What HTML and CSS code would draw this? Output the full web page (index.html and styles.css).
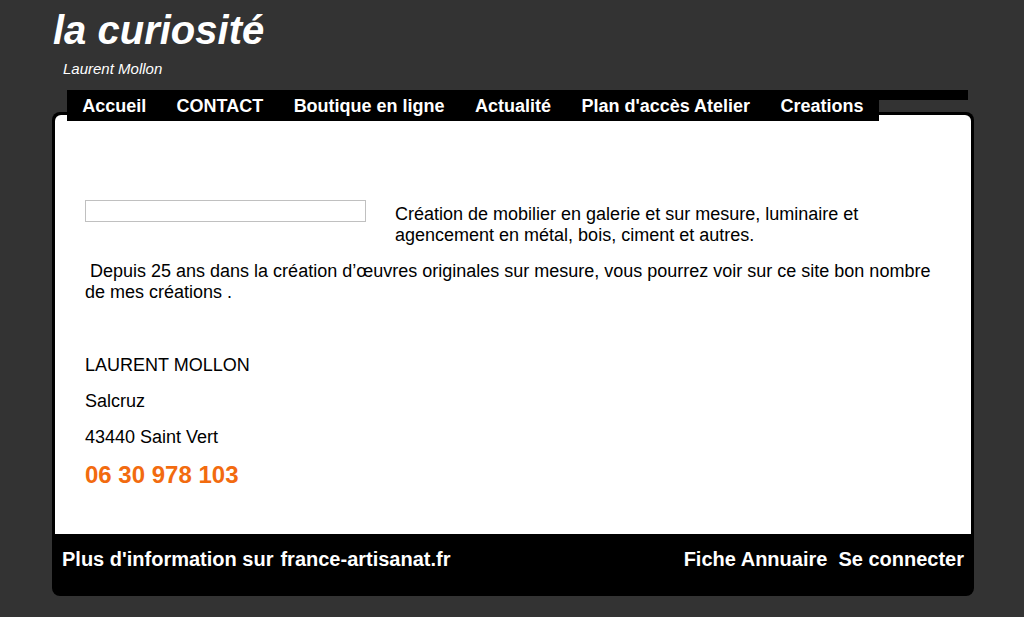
FILE: index.html
```html
<!DOCTYPE html>
<html lang="fr">
<head>
    <meta charset="UTF-8">
    <meta name="viewport" content="width=device-width, initial-scale=1.0">
    <title>la curiosité</title>
    <link rel="stylesheet" href="styles.css">
</head>
<body>
    <div class="page">
        <header class="site-header">
            <h1 class="site-title">la curiosité</h1>
            <p class="site-sub">Laurent Mollon</p>
        </header>
        <nav class="menu">
            <ul>
                <li><a href="#">Accueil</a></li>
                <li><a href="#">CONTACT</a></li>
                <li><a href="#">Boutique en ligne</a></li>
                <li><a href="#">Actualité</a></li>
                <li><a href="#">Plan d'accès Atelier</a></li>
                <li><a href="#">Creations</a></li>
            </ul>
        </nav>
        <section class="panel">
            <div class="content">
                <div class="intro">
                    <div class="pic"></div>
                    <p>Création de mobilier en galerie et sur mesure, luminaire et agencement en métal, bois, ciment et autres.</p>
                </div>
                <p class="lead">&nbsp;Depuis 25 ans dans la création d’œuvres originales sur mesure, vous pourrez voir sur ce site bon nombre de mes créations .</p>
                <div class="contact">
                    <p>LAURENT MOLLON</p>
                    <p>Salcruz</p>
                    <p>43440 Saint Vert</p>
                    <p class="phone">06 30 978 103</p>
                </div>
            </div>
            <footer class="foot">
                <div class="foot-left">
                    <span>Plus d'information sur</span>
                    <a href="#">france-artisanat.fr</a>
                </div>
                <div class="foot-right">
                    <a href="#">Fiche Annuaire</a>
                    <a href="#">Se connecter</a>
                </div>
            </footer>
        </section>
    </div>
</body>
</html>
```

FILE: styles.css
```css
body{
    margin: 0px;
    background: #333333;
    font-family: "Liberation Sans", Arial, sans-serif;
    color: #000;
}
a{
    color: #fff;
    text-decoration: none;
}
.page{
    width: 922px;
    margin: 0px 0px 0px 52px;
    padding-bottom: 21px;
}
.site-header{
    padding: 7px 0px 0px 1px;
}
.site-title{
    margin: 0px;
    font-size: 40px;
    font-style: italic;
    font-weight: bold;
    line-height: 46px;
    color: #fff;
}
.site-sub{
    margin: 6px 0px 0px 10px;
    font-size: 15px;
    font-style: italic;
    line-height: 20px;
    color: #fff;
}
.menu{
    position: relative;
    z-index: 1;
    margin: 11px 6px -9px 15px;
    background: linear-gradient(#000 0px, #000 10px, transparent 10px);
}
.menu ul{
    display: inline-flex;
    margin: 0px;
    padding: 0px;
    list-style: none;
    background: #000;
}
.menu li a{
    display: block;
    padding: 2px 15.2px 0px 15.2px;
    font-size: 18px;
    font-weight: bold;
    line-height: 29px;
}
.panel{
    background: #000;
    border-radius: 8px;
    padding: 3px 3px 0px 3px;
}
.content{
    background: #fff;
    border-radius: 6px 6px 0px 0px;
    padding: 85px 30px 45px 30px;
    font-size: 18px;
    line-height: 21px;
}
.content p{
    margin: 0px;
}
.intro{
    display: flex;
    gap: 29px;
    align-items: flex-start;
}
.pic{
    flex: none;
    width: 279px;
    height: 20px;
    border: 1px solid #c0c0c0;
}
.intro p{
    margin-top: 4px;
}
.lead{
    padding-top: 15px;
}
.contact{
    padding-top: 52px;
    display: flex;
    flex-direction: column;
    gap: 15px;
}
.contact .phone{
    margin-top: -2px;
    font-size: 24px;
    font-weight: bold;
    line-height: 28px;
    color: #f26b0f;
}
.foot{
    display: flex;
    justify-content: space-between;
    padding: 14px 7px 25px 7px;
    color: #fff;
    font-size: 20px;
    font-weight: bold;
    line-height: 23px;
}
.foot-left{
    display: flex;
    gap: 7px;
}
.foot-right{
    display: flex;
    gap: 11px;
}
```
